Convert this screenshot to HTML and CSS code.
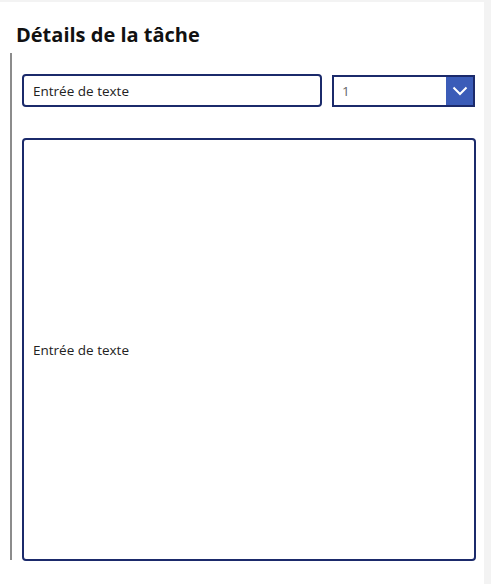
FILE: index.html
```html
<!DOCTYPE html>
<html lang="fr">
<head>
    <meta charset="UTF-8">
    <title>Détails de la tâche</title>
    <link rel="stylesheet" href="styles.css">
</head>
<body>
    <div class="panel">
        <h1 class="title">Détails de la tâche</h1>
        <div class="form-area">
            <div class="row">
                <div class="text-input">Entrée de texte</div>
                <div class="dropdown">
                    <span class="dropdown-value">1</span>
                    <span class="dropdown-arrow">
                        <svg width="16" height="10" viewBox="0 0 16 10">
                            <path d="M1.5 1.5 L8 8 L14.5 1.5" fill="none" stroke="#fff" stroke-width="2"/>
                        </svg>
                    </span>
                </div>
            </div>
            <div class="text-area">Entrée de texte</div>
        </div>
    </div>
</body>
</html>
```

FILE: styles.css
```css
html, body {
    margin: 0;
    padding: 0;
    background-color: #f3f3f3;
    font-family: 'Open Sans', 'Noto Sans', sans-serif;
}
.panel {
    width: 484px;
    height: 582px;
    margin-top: 2px;
    background-color: #fff;
    box-sizing: border-box;
    padding: 0 0 0 10px;
}
.title {
    margin: 0;
    padding: 21px 0 0 6px;
    height: 30px;
    font-size: 20px;
    font-weight: 700;
    color: #111;
    line-height: 24px;
}
.form-area {
    border-left: 2px solid #8c8c8c;
    height: 507px;
    padding: 21px 0 0 10px;
    box-sizing: border-box;
}
.row {
    display: flex;
    gap: 10px;
    height: 33px;
}
.text-input {
    width: 300px;
    height: 33px;
    box-sizing: border-box;
    border: 2px solid #1b2a6b;
    border-radius: 4px;
    padding-left: 9px;
    font-size: 13.5px;
    color: #222;
    display: flex;
    align-items: center;
}
.dropdown {
    width: 143px;
    height: 32px;
    margin-top: 1px;
    box-sizing: border-box;
    border: 2px solid #1b2a6b;
    display: flex;
    align-items: stretch;
}
.dropdown-value {
    flex: 1;
    padding-left: 8px;
    font-size: 13.5px;
    color: #666;
    display: flex;
    align-items: center;
}
.dropdown-arrow {
    width: 27px;
    background-color: #3b5cb8;
    display: flex;
    align-items: center;
    justify-content: center;
}
.text-area {
    margin-top: 31px;
    width: 454px;
    height: 423px;
    box-sizing: border-box;
    border: 2px solid #1b2a6b;
    border-radius: 4px;
    padding-left: 9px;
    font-size: 13.5px;
    color: #222;
    display: flex;
    align-items: center;
}
```
